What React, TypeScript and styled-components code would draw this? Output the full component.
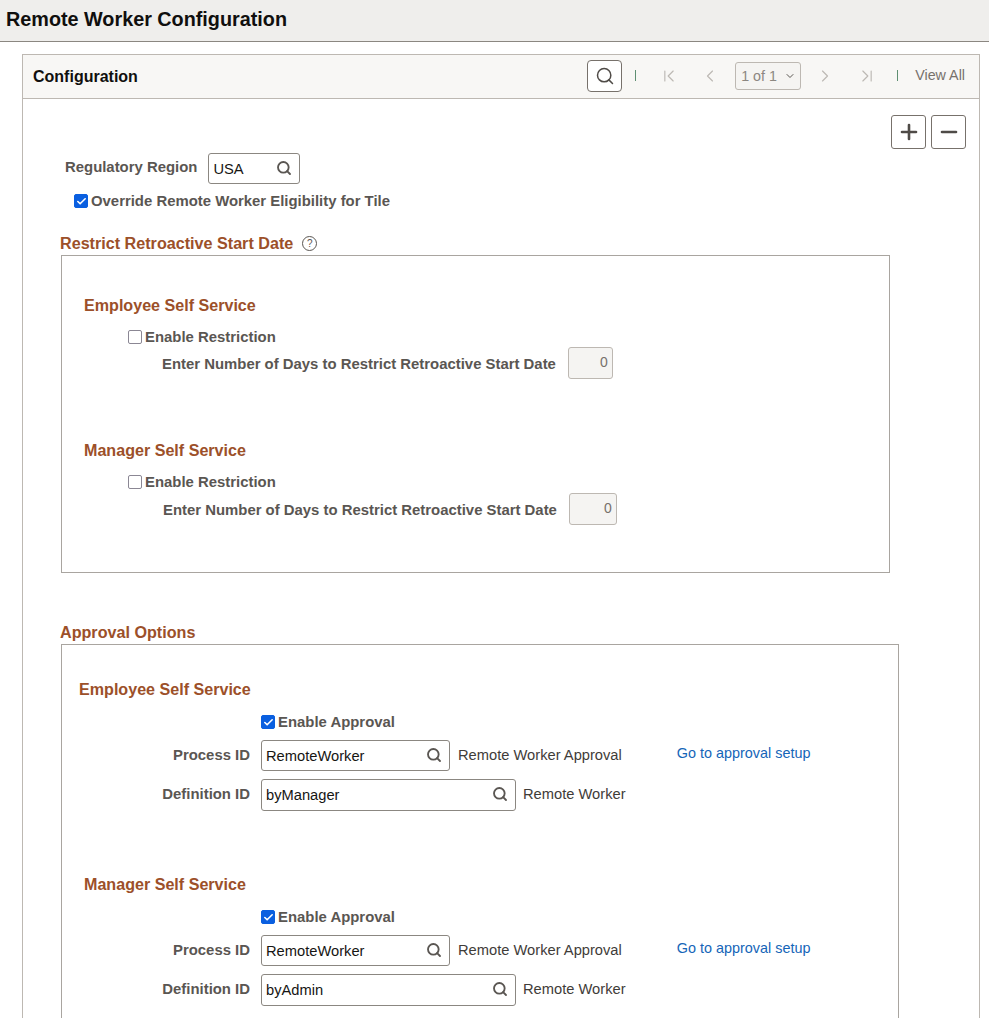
import styled, { createGlobalStyle } from 'styled-components'
import { Check, ChevronDown, ChevronFirst, ChevronLast, ChevronLeft, ChevronRight, Minus, Plus, Search } from 'lucide-react'

const GlobalStyle = createGlobalStyle`
  html, body {
    margin: 0;
    padding: 0;
    background: #fff;
    font-family: "Liberation Sans", Arial, sans-serif;
  }
  * { box-sizing: border-box; }
`

const Page = styled.div`
  height: 1018px;
  overflow: hidden;
`

const TitleBar = styled.header`
  height: 42px;
  padding: 0 0 2px 6px;
  display: flex;
  align-items: center;
  background: #efeeec;
  border-bottom: 1px solid #8b8781;
`

const PageTitle = styled.h1`
  margin: 0;
  font-size: 19.8px;
  font-weight: 700;
  color: #100f0e;
`

const Panel = styled.section`
  margin: 12px 9px 0 22px;
  border: 1px solid #bdb8b2;
  border-bottom: 0;
`

const PanelHeader = styled.div`
  height: 44px;
  padding: 0 14px 2px 10px;
  display: flex;
  align-items: center;
  background: #f8f7f5;
  border-bottom: 1px solid #bdb8b2;
`

const PanelTitle = styled.h2`
  margin: 2px 0 0;
  flex: 1;
  font-size: 16px;
  font-weight: 700;
  color: #100f0e;
`

const SearchButton = styled.button`
  width: 35px;
  height: 32px;
  padding: 0;
  display: flex;
  align-items: center;
  justify-content: center;
  background: #fff;
  border: 1px solid #77716b;
  border-radius: 4px;
  color: #4f4b47;
`

const Separator = styled.span`
  width: 1px;
  height: 11px;
  background: #5f8f72;
  margin-left: ${props => props.$left}px;
`

const PagerIcon = styled.span`
  display: flex;
  margin-left: ${props => props.$left}px;
  color: #bdb9b4;
`

const PageSelect = styled.div`
  width: 66px;
  height: 28px;
  margin-left: 15px;
  padding-left: 5px;
  display: flex;
  align-items: center;
  gap: 7px;
  background: #f5f4f2;
  border: 1px solid #bdb8b2;
  border-radius: 3px;
  font-size: 14.3px;
  color: #8c8781;

  svg {
    color: #5a5652;
  }
`

const ViewAll = styled.a`
  margin-left: 17px;
  margin-bottom: 1px;
  font-size: 14.3px;
  color: #77716b;
`

const PanelBody = styled.div`
  padding: 16px 13px 0 37px;
`

const ActionRow = styled.div`
  display: flex;
  justify-content: flex-end;
  gap: 5px;
`

const ActionButton = styled.button`
  width: 35px;
  height: 34px;
  padding: 0;
  display: flex;
  align-items: center;
  justify-content: center;
  background: #fff;
  border: 1px solid #77716b;
  border-radius: 3px;
  color: #4f4b47;
`

const Label = styled.label`
  font-size: 14.9px;
  font-weight: 700;
  color: #5a5652;
  white-space: nowrap;
`

const RegionRow = styled.div`
  height: 31px;
  margin: 4px 0 0 5px;
  display: flex;
  align-items: center;
  gap: 11px;
`

const RegionLabel = styled(Label)`
  margin-bottom: 3px;
`

const Field = styled.div`
  width: ${props => props.$width}px;
  height: ${props => props.$height || 32}px;
  padding: 0 7px 0 4px;
  display: flex;
  align-items: center;
  justify-content: space-between;
  background: #fff;
  border: 1px solid #8b8781;
  border-radius: 3px;
  font-size: 14.7px;
  color: #161513;
  flex: none;

  svg {
    color: #5a5652;
    margin-top: -2px;
  }
`

const CheckRow = styled.div`
  height: 20px;
  margin-top: ${props => props.$top}px;
  margin-left: ${props => props.$left}px;
  display: flex;
  align-items: center;
  gap: 3px;
`

const CheckBox = styled.span`
  width: 14px;
  height: 14px;
  display: flex;
  align-items: center;
  justify-content: center;
  border-radius: 2px;
  border: 1.5px solid ${props => (props.$checked ? '#0a5fe0' : '#8b8794')};
  background: ${props => (props.$checked ? '#0a5fe0' : '#fff')};
  color: #fff;
  flex: none;
`

const SectionTitle = styled.h3`
  height: 20px;
  margin: ${props => props.$top}px 0 0 0;
  padding-top: 1px;
  display: flex;
  align-items: center;
  gap: 9px;
  font-size: 16.15px;
  font-weight: 700;
  color: #9c5029;
`

const HelpIcon = styled.span`
  width: 15px;
  height: 15px;
  display: flex;
  align-items: center;
  justify-content: center;
  border: 1px solid #5a5652;
  border-radius: 50%;
  font-size: 10px;
  font-weight: 400;
  color: #5a5652;
`

const GroupBox = styled.div`
  width: ${props => props.$width}px;
  height: ${props => (props.$height ? `${props.$height}px` : 'auto')};
  margin: 2px 0 0 1px;
  padding-top: ${props => props.$top}px;
  padding-bottom: ${props => props.$bottom || 0}px;
  border: 1px solid #a9a5a0;
`

const GroupHeading = styled.h4`
  height: 20px;
  margin: ${props => props.$top || 0}px 0 0 ${props => props.$left}px;
  display: flex;
  align-items: center;
  font-size: 16.1px;
  font-weight: 700;
  color: #9c5029;
`

const DaysRow = styled.div`
  height: 32px;
  margin: ${props => props.$top || 0}px 0 0 ${props => props.$left}px;
  display: flex;
  align-items: center;
  gap: 12px;
`

const DaysLabel = styled(Label)`
  margin-top: 1px;
`

const DaysInput = styled.div`
  width: ${props => props.$width}px;
  height: 32px;
  padding: 0 4px 3px 0;
  display: flex;
  align-items: center;
  justify-content: flex-end;
  background: #f5f4f2;
  border: 1px solid #bdb8b2;
  border-radius: 3px;
  font-size: 14px;
  color: #77716b;
`

const ApprovalRow = styled.div`
  height: ${props => props.$height}px;
  margin-top: 8px;
  display: flex;
  align-items: center;
`

const RowLabel = styled(Label)`
  width: 188px;
  margin: 0 11px 2px 0;
  text-align: right;
`

const Description = styled.span`
  margin: 0 0 2px ${props => props.$left}px;
  font-size: 14.7px;
  color: #3f3c39;
  white-space: nowrap;
`

const SetupLink = styled.a`
  margin-left: 55px;
  margin-bottom: 6px;
  font-size: 14.4px;
  color: #1565b8;
  white-space: nowrap;
`

const SearchIcon = () => <Search size={16} strokeWidth={2.8} />

const EnableCheck = ({ label, checked, top, left }: { label: string; checked?: boolean; top: number; left: number }) => (
  <CheckRow $top={top} $left={left}>
    <CheckBox $checked={checked}>{checked && <Check size={11} strokeWidth={3.5} />}</CheckBox>
    <Label>{label}</Label>
  </CheckRow>
)

const ApprovalBlock = ({ definition }: { definition: string }) => (
  <>
    <EnableCheck label="Enable Approval" checked top={13} left={199} />
    <ApprovalRow $height={31}>
      <RowLabel>Process ID</RowLabel>
      <Field $width={189} $height={31}>
        RemoteWorker
        <SearchIcon />
      </Field>
      <Description $left={8}>Remote Worker Approval</Description>
      <SetupLink>Go to approval setup</SetupLink>
    </ApprovalRow>
    <ApprovalRow $height={32}>
      <RowLabel>Definition ID</RowLabel>
      <Field $width={255}>
        {definition}
        <SearchIcon />
      </Field>
      <Description $left={7}>Remote Worker</Description>
    </ApprovalRow>
  </>
)

export default function App() {
  return (
    <Page>
      <GlobalStyle />
      <TitleBar>
        <PageTitle>Remote Worker Configuration</PageTitle>
      </TitleBar>
      <Panel>
        <PanelHeader>
          <PanelTitle>Configuration</PanelTitle>
          <SearchButton>
            <Search size={20} strokeWidth={1.8} />
          </SearchButton>
          <Separator $left={13} />
          <PagerIcon $left={23}>
            <ChevronFirst size={20} strokeWidth={1.4} />
          </PagerIcon>
          <PagerIcon $left={21}>
            <ChevronLeft size={20} strokeWidth={1.4} />
          </PagerIcon>
          <PageSelect>
            1 of 1
            <ChevronDown size={12} strokeWidth={2} />
          </PageSelect>
          <PagerIcon $left={14}>
            <ChevronRight size={20} strokeWidth={1.4} />
          </PagerIcon>
          <PagerIcon $left={22}>
            <ChevronLast size={20} strokeWidth={1.4} />
          </PagerIcon>
          <Separator $left={20} />
          <ViewAll>View All</ViewAll>
        </PanelHeader>
        <PanelBody>
          <ActionRow>
            <ActionButton>
              <Plus size={24} strokeWidth={2.6} />
            </ActionButton>
            <ActionButton>
              <Minus size={24} strokeWidth={2.6} />
            </ActionButton>
          </ActionRow>
          <RegionRow>
            <RegionLabel>Regulatory Region</RegionLabel>
            <Field $width={92} $height={31}>
              USA
              <SearchIcon />
            </Field>
          </RegionRow>
          <EnableCheck label="Override Remote Worker Eligibility for Tile" checked top={7} left={14} />
          <SectionTitle $top={22}>
            Restrict Retroactive Start Date
            <HelpIcon>?</HelpIcon>
          </SectionTitle>
          <GroupBox $width={829} $height={318} $top={39}>
            <GroupHeading $left={22}>Employee Self Service</GroupHeading>
            <EnableCheck label="Enable Restriction" top={12} left={66} />
            <DaysRow $left={100}>
              <DaysLabel>Enter Number of Days to Restrict Retroactive Start Date</DaysLabel>
              <DaysInput $width={45}>0</DaysInput>
            </DaysRow>
            <GroupHeading $left={22} $top={61}>
              Manager Self Service
            </GroupHeading>
            <EnableCheck label="Enable Restriction" top={12} left={66} />
            <DaysRow $left={101} $top={1}>
              <DaysLabel>Enter Number of Days to Restrict Retroactive Start Date</DaysLabel>
              <DaysInput $width={48}>0</DaysInput>
            </DaysRow>
          </GroupBox>
          <SectionTitle $top={49}>Approval Options</SectionTitle>
          <GroupBox $width={838} $top={34} $bottom={40}>
            <GroupHeading $left={17}>Employee Self Service</GroupHeading>
            <ApprovalBlock definition="byManager" />
            <GroupHeading $left={22} $top={63}>
              Manager Self Service
            </GroupHeading>
            <ApprovalBlock definition="byAdmin" />
          </GroupBox>
        </PanelBody>
      </Panel>
    </Page>
  )
}
